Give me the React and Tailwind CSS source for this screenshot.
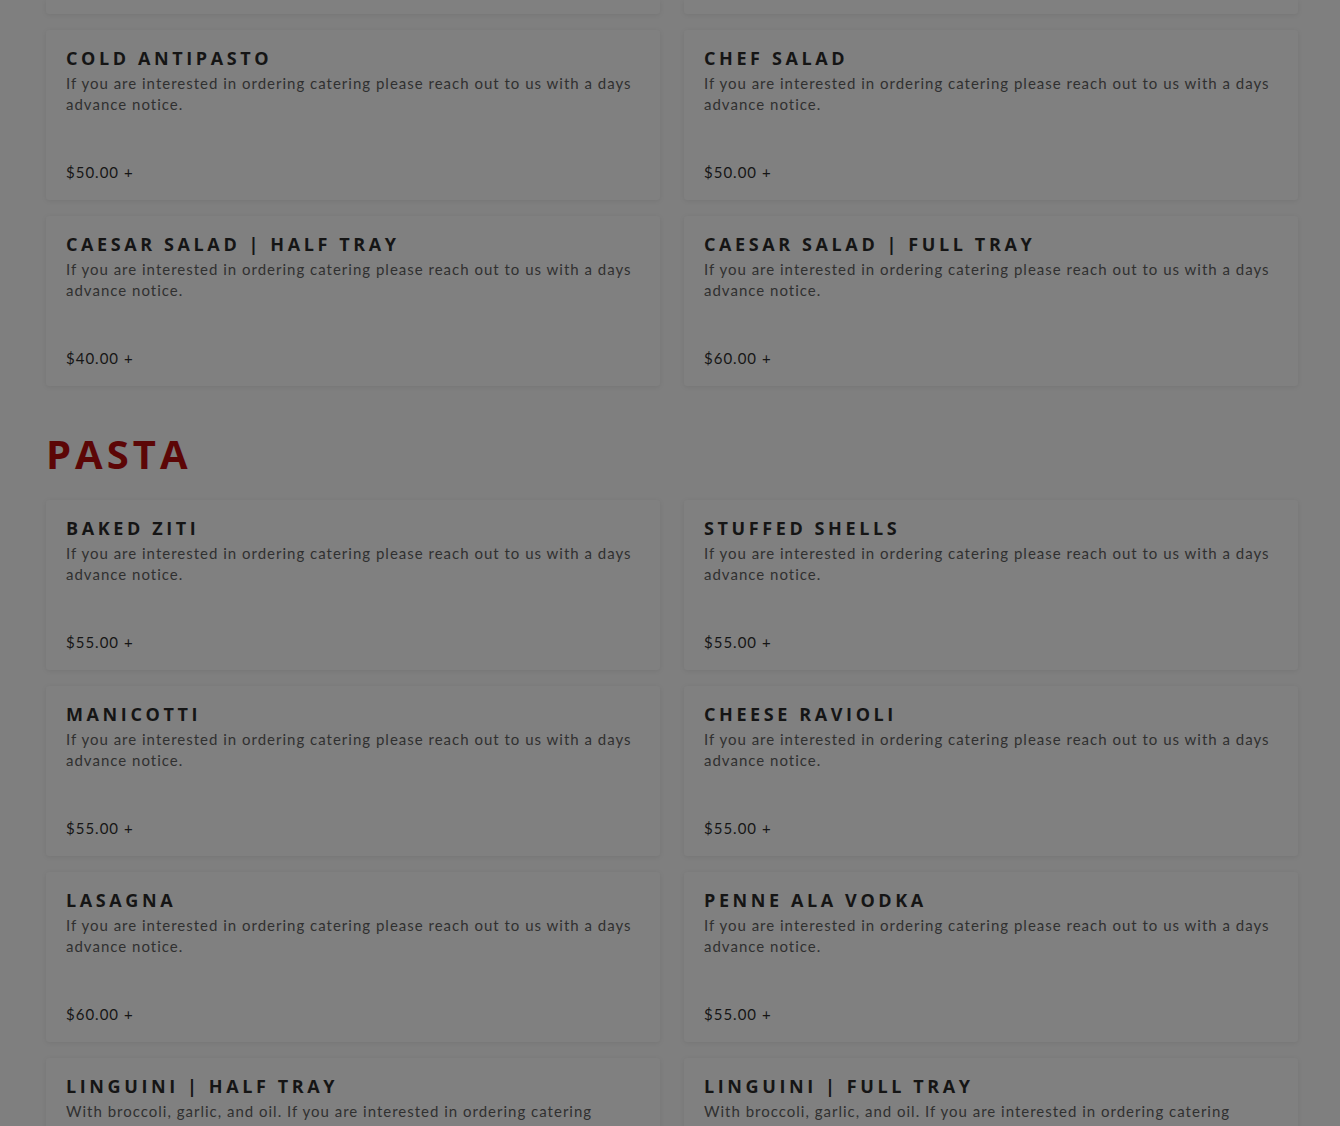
import React from 'react';

const NOTE = 'If you are interested in ordering catering please reach out to us with a days advance notice.';

const salads = [
  { name: 'Cold Antipasto', price: '$50.00' },
  { name: 'Chef Salad', price: '$50.00' },
  { name: 'Caesar Salad | Half Tray', price: '$40.00' },
  { name: 'Caesar Salad | Full Tray', price: '$60.00' },
];

const pasta = [
  { name: 'Baked Ziti', price: '$55.00' },
  { name: 'Stuffed Shells', price: '$55.00' },
  { name: 'Manicotti', price: '$55.00' },
  { name: 'Cheese Ravioli', price: '$55.00' },
  { name: 'Lasagna', price: '$60.00' },
  { name: 'Penne Ala Vodka', price: '$55.00' },
  { name: 'Linguini | Half Tray', price: '$40.00', desc: 'With broccoli, garlic, and oil. ' + NOTE },
  { name: 'Linguini | Full Tray', price: '$60.00', desc: 'With broccoli, garlic, and oil. ' + NOTE },
];

const cardBase = 'bg-[#808080] rounded-[3px] shadow-[0_1px_5px_rgba(0,0,0,0.08)]';

const MenuCard = ({ item }) => (
  <div className={`${cardBase} h-[170px] pl-[20px] pr-[18px] pt-[16px] pb-[17px] flex flex-col justify-between`}>
    <div>
      <h3 className="font-['Open_Sans',sans-serif] font-bold uppercase text-[18px] leading-[24px] tracking-[0.2em] text-[#151515]">
        {item.name}
      </h3>
      <p className="mt-[3px] font-['Lato',sans-serif] text-[15px] leading-[21px] tracking-[1px] text-[#303030]">
        {item.desc || NOTE}
      </p>
    </div>
    <div className="font-['Lato',sans-serif] text-[15px] tracking-[1px] text-[#161616]">
      {item.price} +
    </div>
  </div>
);

export default function App() {
  return (
    <div className="h-[1126px] overflow-hidden bg-[#7f7f7f]">
      <div className="ml-[46px] mr-[42px] grid grid-cols-1">
        <div className="grid grid-cols-2 gap-x-[24px] gap-y-[16px]">
          <div className={`${cardBase} h-[14px] rounded-t-none`} />
          <div className={`${cardBase} h-[14px] rounded-t-none`} />
          {salads.map((s) => (
            <MenuCard key={s.name} item={s} />
          ))}
        </div>

        <h2 className="mt-[45px] mb-[23px] font-['Open_Sans',sans-serif] font-bold uppercase text-[40px] leading-[46px] tracking-[0.1em] text-[#5c0606]">
          Pasta
        </h2>

        <div className="grid grid-cols-2 gap-x-[24px] gap-y-[16px]">
          {pasta.map((p) => (
            <MenuCard key={p.name} item={p} />
          ))}
        </div>
      </div>
    </div>
  );
}
